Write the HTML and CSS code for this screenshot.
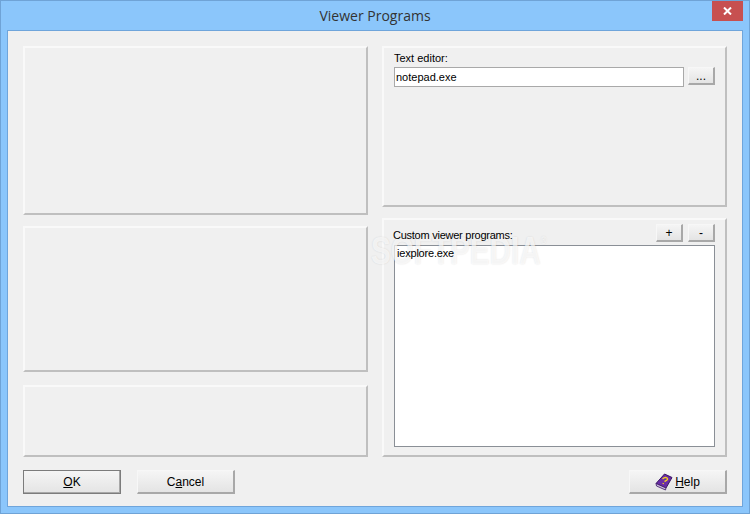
FILE: index.html
```html
<!DOCTYPE html>
<html lang="en">
<head>
<meta charset="utf-8">
<title>Viewer Programs</title>
<link rel="stylesheet" href="styles.css">
</head>
<body>
<div class="window">
  <header class="titlebar">
    <h1 class="title">Viewer Programs</h1>
    <div class="close" aria-label="Close">
      <svg width="9" height="8" viewBox="0 0 9 8"><path d="M1 .5l7 7M8 .5l-7 7" stroke="#fff" stroke-width="2" fill="none"/></svg>
    </div>
  </header>
  <main class="client">
    <div class="columns">
      <div class="col">
        <section class="panel p-left-1"></section>
        <section class="panel p-left-2"></section>
        <section class="panel p-left-3"></section>
      </div>
      <div class="col">
        <section class="panel p-editor">
          <label class="label">Text editor:</label>
          <div class="editor-row">
            <div class="input">notepad.exe</div>
            <button class="btn btn-small">...</button>
          </div>
        </section>
        <section class="panel p-custom">
          <div class="custom-head">
            <label class="label label-custom">Custom viewer programs:</label>
            <div class="custom-actions">
              <button class="btn btn-small">+</button>
              <button class="btn btn-small">-</button>
            </div>
          </div>
          <div class="listbox"><span class="list-item">iexplore.exe</span></div>
          <div class="watermark">SOFTPEDIA<sup>®</sup></div>
        </section>
      </div>
    </div>
    <footer class="footer">
      <button class="btn btn-main btn-default"><u>O</u>K</button>
      <button class="btn btn-main">C<u>a</u>ncel</button>
      <button class="btn btn-main btn-help">
        <svg width="18" height="18" viewBox="0 0 18 18"><path d="M1 10.500L9.500 1 17 4.500 11 15z" fill="#6a2ca6" stroke="#3a1764"/><path d="M1 10.500l.5 2.500L10.500 17l.5-2z" fill="#cdbbe0" stroke="#3a1764" stroke-width=".8"/><path d="M7.500 6q2.500-2.500 4.500-1t-2.500 3.500M8.500 10l-.5 1" stroke="#f5d020" stroke-width="1.400" fill="none"/></svg>
        <span><u>H</u>elp</span>
      </button>
    </footer>
  </main>
</div>
</body>
</html>
```
FILE: styles.css
```css
* { box-sizing: border-box; }
html, body { margin: 0; padding: 0; }
body { width: 750px; height: 514px; overflow: hidden; font-family: "Liberation Sans", Arial, sans-serif; font-size: 11px; color: #000; }
.window { width: 750px; height: 514px; background: #8bc6fb; border: 1px solid #6fa3d6; padding: 0 6px 6px 6px; display: flex; flex-direction: column; }
.titlebar { height: 29px; position: relative; display: flex; align-items: center; justify-content: center; flex: none; }
.title { margin: 0; font-family: "Open Sans", "Noto Sans", sans-serif; font-weight: 400; font-size: 14px; color: #333; }
.close { position: absolute; top: 0; right: 0; width: 31px; height: 20px; background: #c75050; display: flex; align-items: center; justify-content: center; }
.client { flex: 1; background: #f0f0f0; border: 1px solid #6fa5db; padding: 15px 15px 12px 15px; display: flex; flex-direction: column; }
.columns { display: flex; gap: 14px; flex: none; }
.col { width: 345px; display: flex; flex-direction: column; gap: 11px; }
.panel { border: 2px solid; border-color: #f9f9f9 #bfbfbf #bfbfbf #f9f9f9; position: relative; }
.p-left-1 { height: 169px; }
.p-left-2 { height: 146px; }
.p-left-3 { height: 72px; margin-top: 2px; }
.p-editor { height: 161px; padding: 3px 10px; }
.p-custom { height: 239px; padding: 4px 10px 8px; }
.label { display: block; line-height: 14px; margin-bottom: 2px; }
.label-custom { margin: 4px 0 0 -1px; letter-spacing: -.25px; position: relative; z-index: 1; }
.editor-row { display: flex; gap: 4px; align-items: flex-start; }
.input { width: 290px; height: 20px; background: #fff; border: 1px solid #a9a9a9; line-height: 18px; padding-left: 1px; }
.btn { font-family: inherit; color: #000; background: linear-gradient(#f5f5f5, #e4e4e4); border: solid #a3a3a3; border-width: 1px 2px 2px 1px; border-color: #f7f7f7 #a8a8a8 #a8a8a8 #f7f7f7; padding: 0; }
.btn-small { width: 27px; height: 18px; font-size: 12px; line-height: 14px; }
.custom-head { display: flex; justify-content: space-between; align-items: flex-start; height: 21px; }
.custom-actions { display: flex; gap: 5px; }
.listbox { height: 202px; background: #fff; border: 1px solid #8a8f96; padding: 0 2px; line-height: 15px; letter-spacing: -.2px; }
.list-item { position: relative; z-index: 1; }
.watermark { position: absolute; left: -13px; top: 9px; font-size: 38px; line-height: 44px; font-weight: 700; color: rgba(255,255,255,.7); text-shadow: 0 0 2px rgba(0,0,0,.12); white-space: nowrap; pointer-events: none; transform: scaleX(.78); transform-origin: left top; }
.watermark sup { font-size: 10px; font-weight: 400; vertical-align: 20px; line-height: 0; }
.footer { display: flex; margin-top: 13px; gap: 16px; }
.btn-main { width: 98px; height: 24px; font-size: 12px; }
.btn-default { border: 1px solid #7c7c7c; box-shadow: inset -1px -1px 0 #a8a8a8; }
.btn-help { margin-left: auto; display: flex; align-items: center; justify-content: center; gap: 2px; }
```
